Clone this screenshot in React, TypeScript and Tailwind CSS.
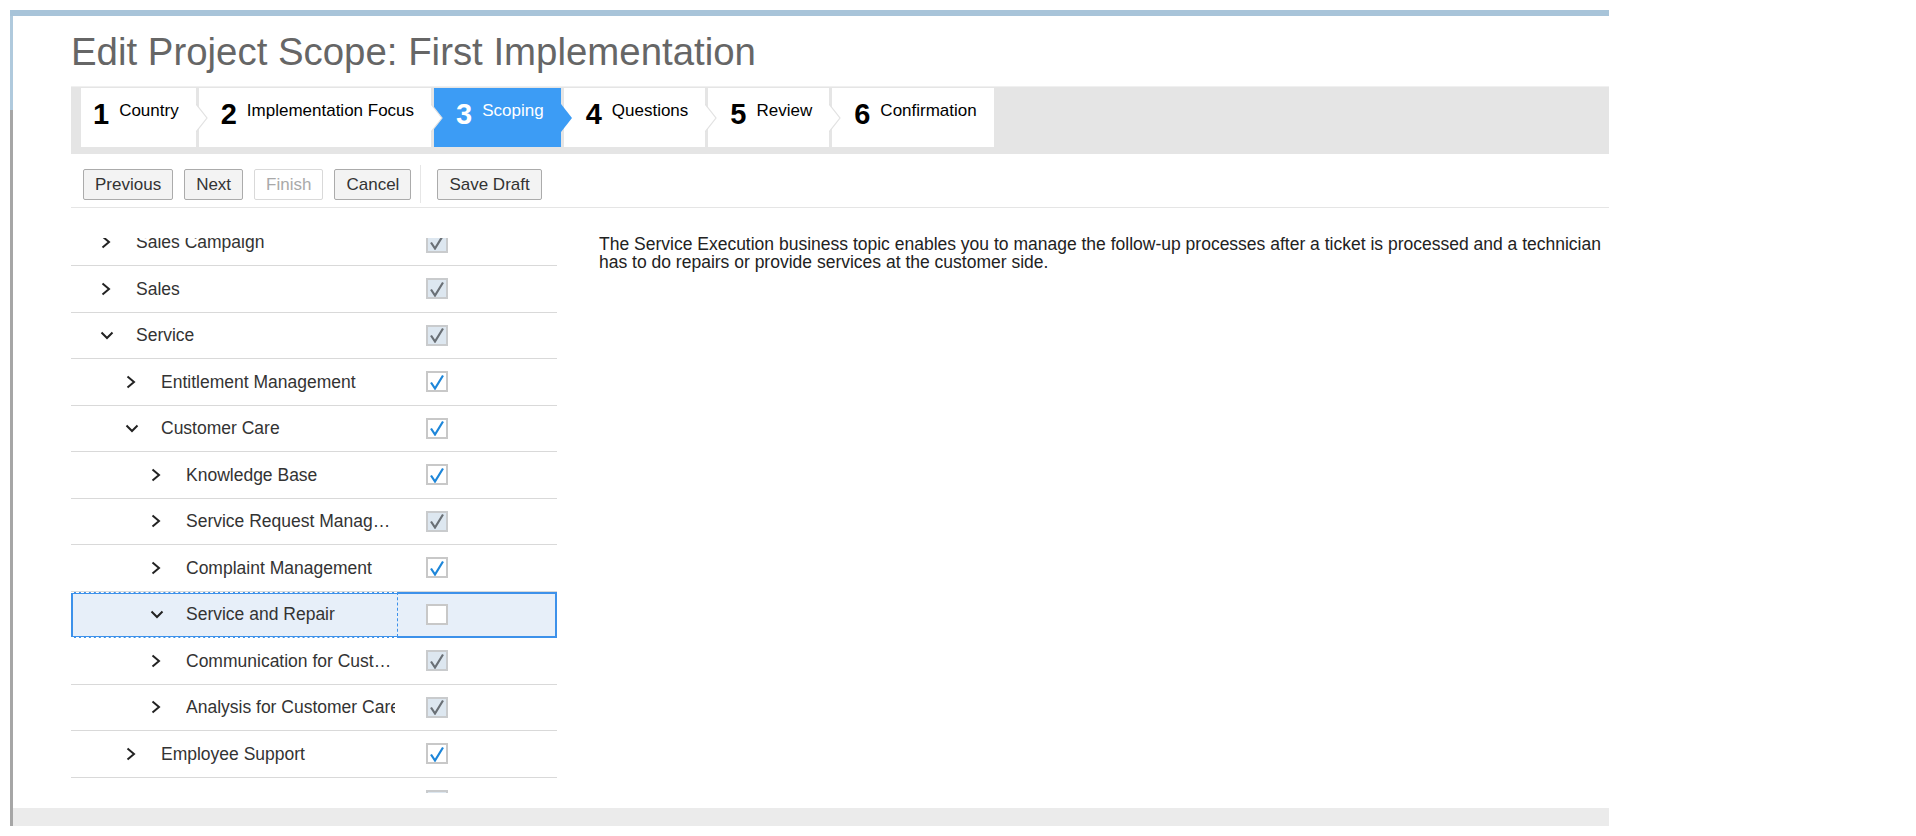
import React from "react";

type CheckState = "on" | "locked" | "off";

type Row = {
  label: string;
  level: number;
  open?: boolean;
  check: CheckState;
  selected?: boolean;
  clip?: boolean;
};

const steps = [
  { n: 1, label: "Country" },
  { n: 2, label: "Implementation Focus" },
  { n: 3, label: "Scoping" },
  { n: 4, label: "Questions" },
  { n: 5, label: "Review" },
  { n: 6, label: "Confirmation" },
];

const rows: Row[] = [
  { label: "Sales Campaign", level: 0, check: "locked" },
  { label: "Sales", level: 0, check: "locked" },
  { label: "Service", level: 0, open: true, check: "locked" },
  { label: "Entitlement Management", level: 1, check: "on" },
  { label: "Customer Care", level: 1, open: true, check: "on" },
  { label: "Knowledge Base", level: 2, check: "on" },
  { label: "Service Request Management", level: 2, check: "locked" },
  { label: "Complaint Management", level: 2, check: "on" },
  { label: "Service and Repair", level: 2, open: true, check: "off", selected: true },
  { label: "Communication for Customer Care", level: 2, check: "locked" },
  { label: "Analysis for Customer Care", level: 2, check: "locked", clip: true },
  { label: "Employee Support", level: 1, check: "on" },
  { label: "", level: 1, check: "locked" },
];

function Chevron({ open }: { open?: boolean }) {
  return (
    <svg width="14" height="14" viewBox="0 0 14 14" className="shrink-0">
      {open ? (
        <polyline points="1.5,4.5 7,10 12.5,4.5" fill="none" stroke="#222" strokeWidth="2" />
      ) : (
        <polyline points="2.5,1.5 9,7 2.5,12.5" fill="none" stroke="#222" strokeWidth="2" />
      )}
    </svg>
  );
}

function Check({ state }: { state: CheckState }) {
  const box =
    state === "locked"
      ? "border-[#c9cbcd] bg-[#dde7f0]"
      : "border-[#c8c8c8] bg-white";
  return (
    <div className={`flex h-[21px] w-[22px] items-center justify-center border-2 ${box}`}>
      {state !== "off" && (
        <svg width="16" height="16" viewBox="0 0 16 16">
          <path
            d="M2 8.5 L6 14.5 L14 1.5"
            fill="none"
            stroke={state === "on" ? "#1d86d9" : "#6a7076"}
            strokeWidth="2.2"
          />
        </svg>
      )}
    </div>
  );
}

function Btn({ children, disabled }: { children: React.ReactNode; disabled?: boolean }) {
  return (
    <div
      className={`flex h-[31px] items-center rounded-[2px] border px-[11px] text-[17px] leading-none ${
        disabled
          ? "border-[#d9d9d9] bg-white text-[#a9a9a9]"
          : "border-[#ababab] bg-[#f3f3f3] text-[#333]"
      }`}
    >
      {children}
    </div>
  );
}

export default function App() {
  return (
    <div className="h-[836px] w-[1916px] bg-white pl-[10px] pt-[10px] font-['Liberation_Sans',Arial,sans-serif]">
      <div className="flex h-[816px] w-[1599px] flex-col">
        <div className="h-[6px] bg-[#a8c4d9]" />
        <div className="flex flex-1">
          <div className="w-[3px] bg-[linear-gradient(#b0cadd_0_94px,#a6a6a6_94px_100%)]" />
          <div className="flex min-w-0 flex-1 flex-col">
            <div className="flex flex-1 flex-col pl-[58px]">
              <h1 className="mt-[17px] text-[38.4px] leading-[38px] text-[#666]">
                Edit Project Scope: First Implementation
              </h1>

              {/* wizard steps */}
              <div className="mt-[15px] flex h-[68px] border-t border-[#f0f0f0] bg-[#e5e5e5] pl-[10px] pt-[1px]">
                {steps.map((s, i) => {
                  const active = s.n === 3;
                  const last = i === steps.length - 1;
                  return (
                    <div
                      key={s.n}
                      className={`relative flex h-[59px] items-start gap-[10px] pr-[17px] pt-[12px] ${
                        i === 0 ? "pl-[12px]" : "ml-[3px] pl-[22px]"
                      } ${active ? "bg-[#3c9cf5] text-white" : "bg-white text-black"}`}
                    >
                      <span className="text-[29px] font-bold leading-[29px]">{s.n}</span>
                      <span className="mt-[2px] text-[17px] leading-[17px]">{s.label}</span>
                      {!last && (
                        <svg
                          width="13"
                          height="28"
                          viewBox="0 0 13 28"
                          className="absolute left-full top-1/2 z-10 -translate-y-1/2"
                        >
                          {active ? (
                            <polygon points="0,0 11,14 0,28" fill="#3c9cf5" />
                          ) : (
                            <>
                              <polygon points="0,0 11,14 0,28" fill="#fff" />
                              <polyline points="0,0 11,14 0,28" fill="none" stroke="#e2e2e2" strokeWidth="1.2" />
                            </>
                          )}
                        </svg>
                      )}
                    </div>
                  );
                })}
              </div>

              {/* toolbar */}
              <div className="flex h-[54px] items-start border-b border-[#e5e5e5] pl-[12px] pt-[15px]">
                <div className="flex gap-[11px]">
                  <Btn>Previous</Btn>
                  <Btn>Next</Btn>
                  <Btn disabled>Finish</Btn>
                  <Btn>Cancel</Btn>
                </div>
                <div className="-mt-[4px] ml-[9px] h-[38px] w-px bg-[#e6e6e6]" />
                <div className="ml-[16px]">
                  <Btn>Save Draft</Btn>
                </div>
              </div>

              {/* body */}
              <div className="flex flex-1">
                <div className="mt-[30px] h-[555px] w-[486px] shrink-0 overflow-hidden">
                  <div className="-mt-[18.5px]">
                    {rows.map((r, i) => (
                      <div
                        key={i}
                        className={`relative flex h-[46.5px] border-b border-[#d9d9d9] ${
                          r.selected ? "bg-[#e7eff9] outline-2 -outline-offset-2 outline-[#3d91ea]" : ""
                        }`}
                      >
                        <div
                          className={`relative flex w-[327px] items-center gap-[22px] pr-[3px] ${
                            r.selected ? "border-r border-dashed border-[#3d91ea]" : ""
                          }`}
                          style={{ paddingLeft: 29 + r.level * 25 }}
                        >
                          {r.label && <Chevron open={r.open} />}
                          <span
                            className={`min-w-0 flex-1 overflow-hidden whitespace-nowrap text-[17.5px] text-[#333] ${
                              r.clip ? "text-clip" : "text-ellipsis"
                            }`}
                          >
                            {r.label}
                          </span>
                          {r.selected && (
                            <>
                              <div className="absolute inset-x-0 top-0 border-t border-dashed border-white" />
                              <div className="absolute inset-x-0 -bottom-px border-t border-dashed border-white" />
                            </>
                          )}
                        </div>
                        <div className="flex items-center pl-[28px]">
                          <Check state={r.check} />
                        </div>
                      </div>
                    ))}
                  </div>
                </div>
                <p className="ml-[42px] mt-[27px] w-[1016px] shrink-0 text-[17.5px] leading-[18px] text-[#222]">
                  The Service Execution business topic enables you to manage the follow-up processes after a ticket is
                  processed and a technician has to do repairs or provide services at the customer side.
                </p>
              </div>
            </div>
            <div className="h-[18px] bg-[#ebebeb]" />
          </div>
        </div>
      </div>
    </div>
  );
}
